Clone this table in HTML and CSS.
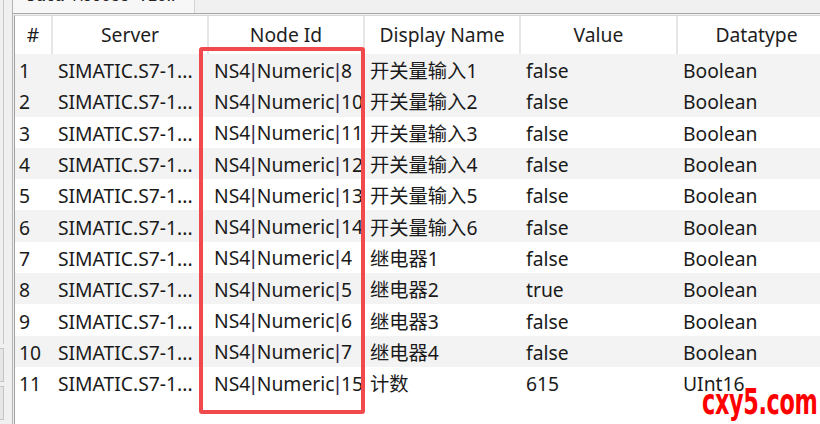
FILE: index.html
```html
<!DOCTYPE html>
<html lang="zh-CN">
<head>
<meta charset="utf-8">
<title>Data Access View</title>
<link rel="stylesheet" href="styles.css">
</head>
<body>
<div class="app">
  <div class="side">
    <div class="side-panel"></div>
    <div class="side-btns">
      <div class="side-btn"></div>
      <div class="side-btn"></div>
    </div>
  </div>
  <div class="main">
    <div class="tabbar">
      <div class="tab"><span class="tab-label">Data Access View</span></div>
    </div>
    <div class="view">
      <table class="grid">
        <colgroup>
          <col class="c-num"><col class="c-srv"><col class="c-node"><col class="c-disp"><col class="c-val"><col class="c-type">
        </colgroup>
        <thead>
          <tr><th>#</th><th>Server</th><th>Node Id</th><th>Display Name</th><th>Value</th><th>Datatype</th></tr>
        </thead>
        <tbody>
          <tr class="sel"><td>1</td><td>SIMATIC.S7-1...</td><td>NS4<span class="sep">|</span>Numeric<span class="sep">|</span>8</td><td>开关量输入1</td><td>false</td><td>Boolean</td></tr>
          <tr><td>2</td><td>SIMATIC.S7-1...</td><td>NS4<span class="sep">|</span>Numeric<span class="sep">|</span>10</td><td>开关量输入2</td><td>false</td><td>Boolean</td></tr>
          <tr><td>3</td><td>SIMATIC.S7-1...</td><td>NS4<span class="sep">|</span>Numeric<span class="sep">|</span>11</td><td>开关量输入3</td><td>false</td><td>Boolean</td></tr>
          <tr><td>4</td><td>SIMATIC.S7-1...</td><td>NS4<span class="sep">|</span>Numeric<span class="sep">|</span>12</td><td>开关量输入4</td><td>false</td><td>Boolean</td></tr>
          <tr><td>5</td><td>SIMATIC.S7-1...</td><td>NS4<span class="sep">|</span>Numeric<span class="sep">|</span>13</td><td>开关量输入5</td><td>false</td><td>Boolean</td></tr>
          <tr><td>6</td><td>SIMATIC.S7-1...</td><td>NS4<span class="sep">|</span>Numeric<span class="sep">|</span>14</td><td>开关量输入6</td><td>false</td><td>Boolean</td></tr>
          <tr><td>7</td><td>SIMATIC.S7-1...</td><td>NS4<span class="sep">|</span>Numeric<span class="sep">|</span>4</td><td>继电器1</td><td>false</td><td>Boolean</td></tr>
          <tr><td>8</td><td>SIMATIC.S7-1...</td><td>NS4<span class="sep">|</span>Numeric<span class="sep">|</span>5</td><td>继电器2</td><td>true</td><td>Boolean</td></tr>
          <tr><td>9</td><td>SIMATIC.S7-1...</td><td>NS4<span class="sep">|</span>Numeric<span class="sep">|</span>6</td><td>继电器3</td><td>false</td><td>Boolean</td></tr>
          <tr><td>10</td><td>SIMATIC.S7-1...</td><td>NS4<span class="sep">|</span>Numeric<span class="sep">|</span>7</td><td>继电器4</td><td>false</td><td>Boolean</td></tr>
          <tr><td>11</td><td>SIMATIC.S7-1...</td><td>NS4<span class="sep">|</span>Numeric<span class="sep">|</span>15</td><td>计数</td><td>615</td><td>UInt16</td></tr>
        </tbody>
      </table>
      <div class="highlight"></div>
      <div class="watermark">cxy5.com</div>
    </div>
  </div>
</div>
</body>
</html>
```

FILE: styles.css
```css
html, body {
  margin: 0;
  padding: 0;
}
body {
  width: 820px;
  height: 424px;
  overflow: hidden;
  background: #f0f0f0;
  font-family: "Noto Sans", "Noto Sans CJK SC", sans-serif;
  color: #1a1a1a;
}
.app {
  display: flex;
  height: 424px;
}
.side {
  width: 12px;
  display: flex;
  flex-direction: column;
  border-right: 1px solid #b4b4b4;
  background: #f0f0f0;
}
.side-panel {
  flex: 1;
  margin-left: 3px;
  border-left: 1px solid #c8c8c8;
  margin-bottom: 4px;
}
.side-btns {
  display: flex;
  flex-direction: column;
  gap: 4px;
  padding-bottom: 4px;
}
.side-btn {
  height: 32px;
  width: 3px;
  border: 1px solid #c4c4c4;
  border-left: none;
  background: #e6e6e6;
}
.main {
  flex: 1;
  display: flex;
  flex-direction: column;
  min-width: 0;
}
.tabbar {
  height: 13px;
  display: flex;
  border-bottom: 1px solid #a8a8a8;
  background: #f0f0f0;
}
.tab {
  width: 181px;
  height: 13px;
  background: #f7f7f7;
  border-right: 1px solid #d4d4d4;
  overflow: hidden;
}
.tab-label {
  display: block;
  font-family: "Liberation Mono", monospace;
  font-size: 15px;
  line-height: 15px;
  margin-top: -10px;
  padding-left: 14px;
  color: #222;
  letter-spacing: 0.3px;
}
.view {
  flex: 1;
  position: relative;
  margin-top: 1px;
  margin-left: 1px;
  border-top: 1px solid #d6d6d6;
  border-left: 1px solid #a0a0a0;
  background: #ffffff;
  overflow: hidden;
}
.grid {
  border-collapse: collapse;
  table-layout: fixed;
  width: 820px;
  font-size: 19.3px;
}
.c-num { width: 37px; }
.c-srv { width: 156px; }
.c-node { width: 156px; }
.c-disp { width: 156px; }
.c-val { width: 157px; }
.c-type { width: 158px; }
.grid th {
  height: 38px;
  padding: 0;
  font-weight: normal;
  text-align: center;
  background: #ffffff;
  border-left: 2px solid #e6e6e6;
  color: #1e1e1e;
  vertical-align: middle;
  line-height: 34px;
}
.grid th:first-child {
  border-left: none;
}
.grid td {
  height: 31.3px;
  padding: 3px 0 0 6px;
  box-sizing: border-box;
  white-space: nowrap;
  overflow: hidden;
  line-height: 26px;
}
.grid td:first-child {
  padding-left: 4px;
}
.sep {
  font-family: "Liberation Sans", sans-serif;
  color: #3a2a55;
  padding: 0 1px 0 0.5px;
}
.grid tbody tr:nth-child(even),
.grid tbody tr.sel {
  background: #f3f3f3;
}
.highlight {
  position: absolute;
  left: 184px;
  top: 31px;
  width: 158px;
  height: 359px;
  border: 4px solid #f04a4c;
  border-radius: 3px;
}
.watermark {
  position: absolute;
  left: 687px;
  top: 366px;
  font-family: "DejaVu Sans Condensed", "DejaVu Sans", sans-serif;
  font-weight: bold;
  font-size: 36px;
  line-height: 40px;
  color: #ff0000;
  transform: scaleX(0.69);
  transform-origin: left center;
  letter-spacing: -0.5px;
}
```
